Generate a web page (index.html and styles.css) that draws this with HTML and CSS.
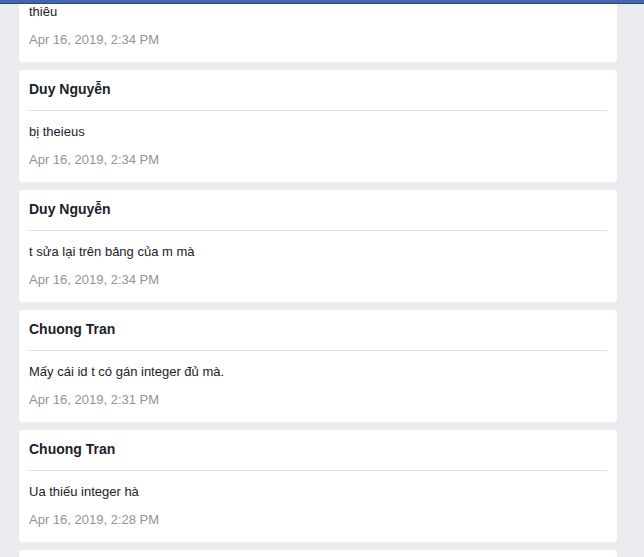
FILE: index.html
```html
<!DOCTYPE html>
<html lang="vi">
<head>
<meta charset="utf-8">
<link rel="stylesheet" href="styles.css">
</head>
<body>
<div class="topbar"></div>
<main class="feed">
  <article class="card card-continued">
    <p class="msg">thiêu</p>
    <p class="date">Apr 16, 2019, 2:34 PM</p>
  </article>
  <article class="card">
    <header class="card-head">Duy Nguyễn</header>
    <p class="msg">bị theieus</p>
    <p class="date">Apr 16, 2019, 2:34 PM</p>
  </article>
  <article class="card">
    <header class="card-head">Duy Nguyễn</header>
    <p class="msg">t sửa lại trên bảng của m mà</p>
    <p class="date">Apr 16, 2019, 2:34 PM</p>
  </article>
  <article class="card">
    <header class="card-head">Chuong Tran</header>
    <p class="msg">Mấy cái id t có gán integer đủ mà.</p>
    <p class="date">Apr 16, 2019, 2:31 PM</p>
  </article>
  <article class="card">
    <header class="card-head">Chuong Tran</header>
    <p class="msg">Ua thiếu integer hà</p>
    <p class="date">Apr 16, 2019, 2:28 PM</p>
  </article>
  <article class="card card-next"></article>
</main>
</body>
</html>
```
FILE: styles.css
```css
html, body {
  margin: 0;
  padding: 0;
  background: #e9ebee;
  font-family: "Liberation Sans", Arial, sans-serif;
  color: #1d2129;
  overflow: hidden;
}
.topbar {
  position: fixed;
  top: 0;
  left: 0;
  right: 0;
  height: 3px;
  background: #4267b2;
  border-bottom: 1px solid #29487d;
  z-index: 10;
}
.feed {
  display: flex;
  flex-direction: column;
  gap: 8px;
  width: 598px;
  margin: -9px 0 0 19px;
}
.card {
  background: #fff;
  border-radius: 3px;
  padding: 0 10px 14px;
}
.card-continued {
  border-radius: 0 0 3px 3px;
}
.card-next {
  height: 40px;
  padding: 0;
}
.card-head {
  font-size: 14px;
  font-weight: bold;
  line-height: 18px;
  padding: 10px 0 12px;
  border-bottom: 1px solid #dddfe2;
}
.msg {
  margin: 13px 0 0;
  font-size: 13px;
  line-height: 16px;
}
.date {
  margin: 12px 0 0;
  font-size: 13px;
  line-height: 16px;
  color: #90949c;
}
```
